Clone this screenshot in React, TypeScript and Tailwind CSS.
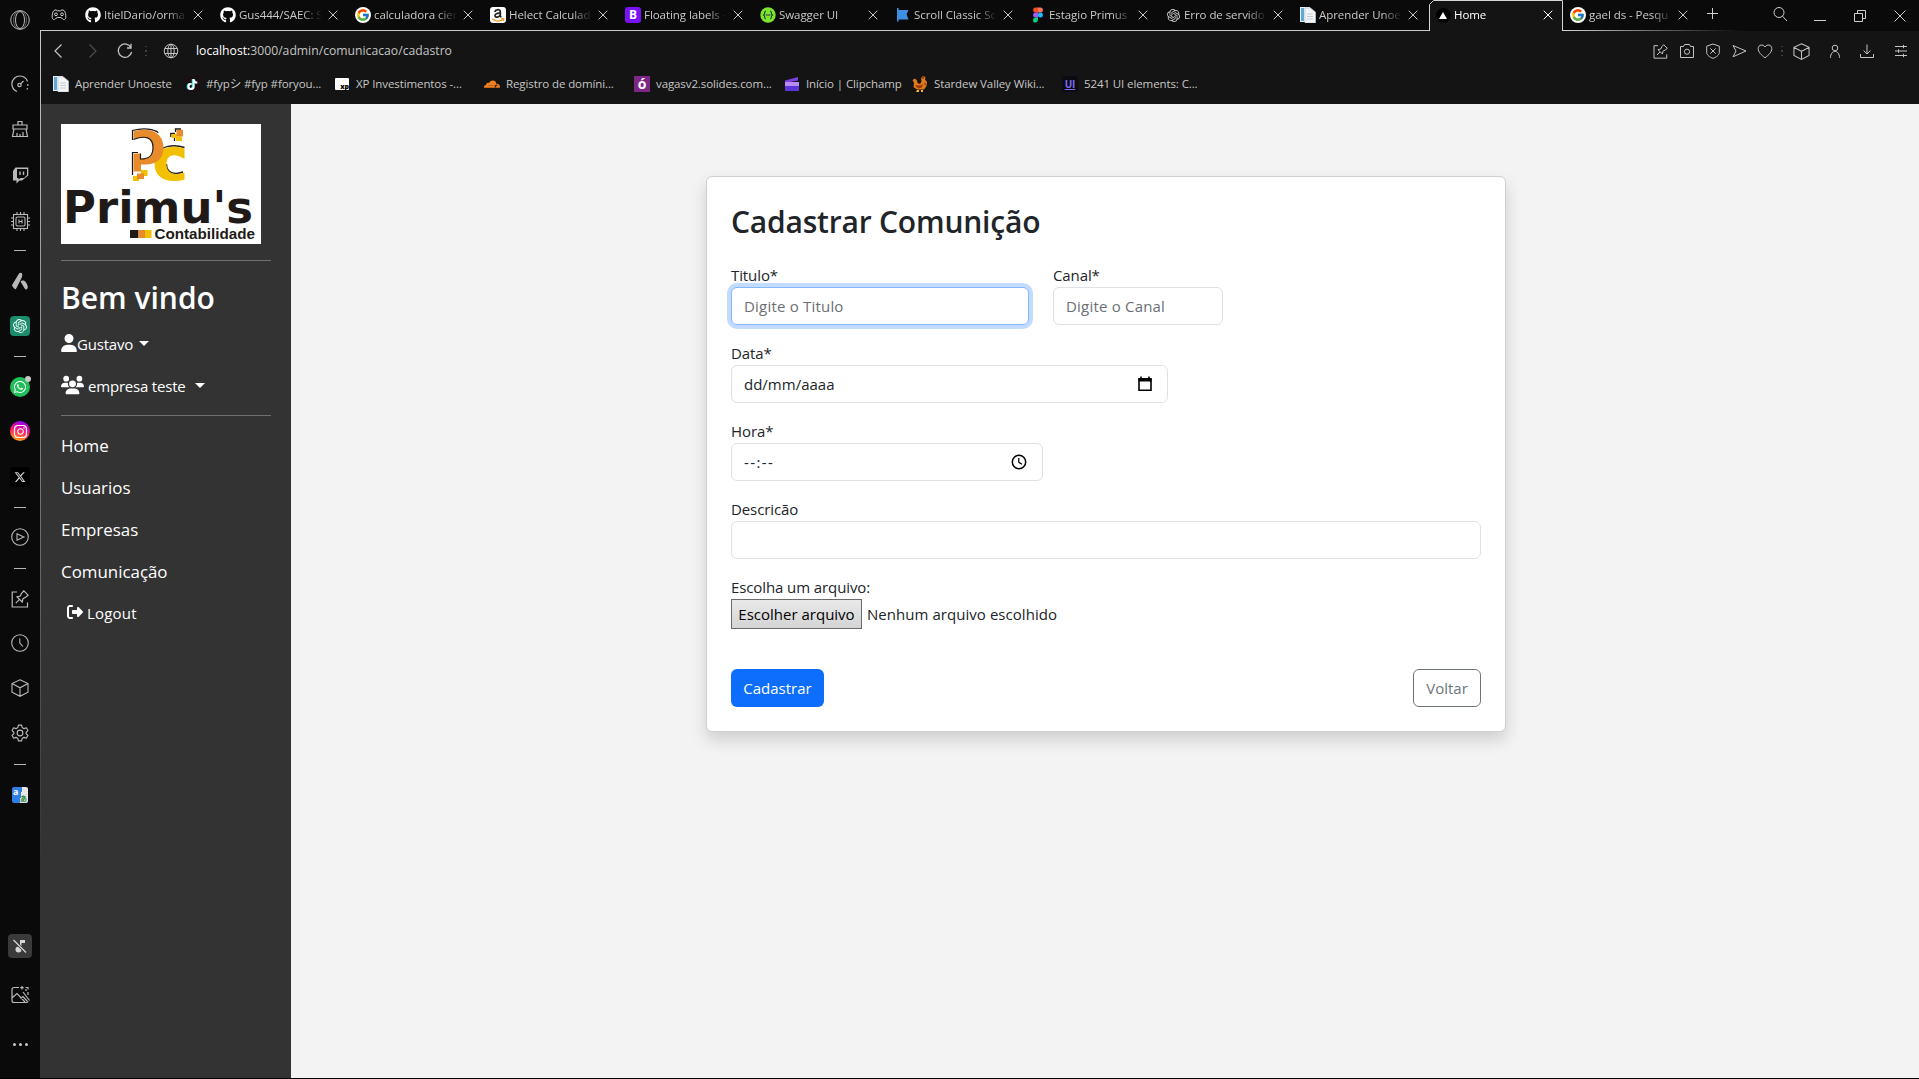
import React, { type ReactNode } from "react";
import { FaGithub, FaAmazon, FaUser, FaUsers, FaRightFromBracket, FaWhatsapp, FaInstagram, FaXTwitter, FaTiktok, FaCloudflare } from "react-icons/fa6";
import { FcGoogle } from "react-icons/fc";
import { SiOpenai } from "react-icons/si";

type IconProps = { children: ReactNode; size?: number; box?: number; sw?: number; className?: string };

function Line({ children, size = 16, box = 16, sw = 1, className = "" }: IconProps) {
  return (
    <svg width={size} height={size} viewBox={`0 0 ${box} ${box}`} fill="none" stroke="currentColor" strokeWidth={sw} className={`shrink-0 ${className}`}>
      {children}
    </svg>
  );
}

const CubeIcon = ({ size = 18 }: { size?: number }) => (
  <Line size={size} box={18} sw={1.1}>
    <path d="M9 .8 17 4.6V13.2L9 17.3 1 13.2V4.6ZM1 4.6 9 8.8 17 4.6M9 8.8V17.3" />
  </Line>
);

const PinIcon = ({ size = 16 }: { size?: number }) => (
  <Line size={size} box={18} sw={1.2}>
    <path d="M6 2H1.2V17H16.5V12.5M4.8 13.2 8.3 9.6M6 6.8 11.2 12 12 8.6 14.6 7.3 17.2 5.2 12.8.8 10.6 3.3 9.3 6Z" />
  </Line>
);

const CloseIcon = ({ className = "" }: { className?: string }) => (
  <Line size={10} box={10} className={className}>
    <path d="M.7.7 9.3 9.3M9.3.7.7 9.3" />
  </Line>
);

const PageIcon = () => (
  <svg width="16" height="16" viewBox="0 0 16 16" className="shrink-0">
    <path d="M0 0H10V15H0Z" fill="#e8f1f8" />
    <path d="M1 1H4V14H1Z" fill="#5fa8d8" />
    <path d="M5 1H10.5L15.5 5V16H5Z" fill="#f3f5f7" stroke="#b8c4cf" strokeWidth=".7" />
    <path d="M7 7H13M7 9.5H13M7 12H13" stroke="#c3ccd6" />
  </svg>
);

const GoogleBadge = () => (
  <span className="flex size-4 shrink-0 items-center justify-center rounded-full bg-white">
    <FcGoogle size={14} />
  </span>
);

const tabs: { label: string; icon: ReactNode; active?: boolean }[] = [
  { label: "ItielDario/orma", icon: <FaGithub size={16} className="text-white" /> },
  { label: "Gus444/SAEC: S", icon: <FaGithub size={16} className="text-white" /> },
  { label: "calculadora cien", icon: <GoogleBadge /> },
  {
    label: "Helect Calculad",
    icon: (
      <span className="flex size-4 items-center justify-center rounded-[3px] bg-white">
        <svg width="14" height="14" viewBox="0 0 14 14">
          <path d="M4 4C4.200 1.200 9.300.8 9.300 3.800V8.200L10.300 9.300M9.300 5.200C5.800 5 3.800 6 4 7.800 4.300 10 8.500 9.500 9.300 6.800" fill="none" stroke="#222" strokeWidth="1.700" />
          <path d="M1 10.800C4.500 13.500 9 13.500 12.500 11.300M10.300 10.600 12.800 10.800 12.300 13" fill="none" stroke="#f79a1c" strokeWidth="1.200" />
        </svg>
      </span>
    ),
  },
  {
    label: "Floating labels ·",
    icon: <span className="flex size-4 items-center justify-center rounded-[3px] bg-[#7a12f8] text-[12px] leading-none font-bold text-white">B</span>,
  },
  {
    label: "Swagger UI",
    icon: (
      <svg width="16" height="16" viewBox="0 0 16 16">
        <circle cx="8" cy="8" r="7.7" fill="#7fe52b" />
        <path d="M5.8 4.2C4 4.2 5.4 7 3.6 8 5.4 9 4 11.8 5.8 11.8M10.2 4.2C12 4.2 10.6 7 12.4 8 10.6 9 12 11.8 10.2 11.8M5.8 8H10.4" fill="none" stroke="#173647" strokeWidth="1.2" />
      </svg>
    ),
  },
  {
    label: "Scroll Classic Sc",
    icon: (
      <svg width="16" height="16" viewBox="0 0 16 16">
        <path d="M2 1H3.6V3H13.500L11.600 7.3 13.500 12.5H3.6V14.5H2Z" fill="#3f8fe0" />
      </svg>
    ),
  },
  {
    label: "Estagio Primus",
    icon: (
      <svg width="16" height="16" viewBox="0 0 16 16">
        <path d="M5.6.5H8V5.5H5.6A2.5 2.5 0 0 1 5.6.5Z" fill="#f24e1e" />
        <path d="M8 .5H10.4A2.5 2.5 0 0 1 10.4 5.5H8Z" fill="#ff7262" />
        <path d="M5.6 5.5H8V10.5H5.6A2.5 2.5 0 0 1 5.6 5.5Z" fill="#a259ff" />
        <circle cx="10.4" cy="8" r="2.5" fill="#1abcfe" />
        <path d="M5.6 10.5H8V13A2.5 2.5 0 1 1 5.6 10.5Z" fill="#0acf83" />
      </svg>
    ),
  },
  { label: "Erro de servido", icon: <SiOpenai size={13} className="text-[#d0d0d0]" /> },
  { label: "Aprender Unoe", icon: <PageIcon /> },
  {
    label: "Home",
    active: true,
    icon: (
      <span className="flex size-[15px] items-center justify-center rounded-full bg-black">
        <svg width="8" height="7" viewBox="0 0 8 7">
          <path d="M4 0 8 7H0Z" fill="#fff" />
        </svg>
      </span>
    ),
  },
  { label: "gael ds - Pesqu", icon: <GoogleBadge /> },
];

function Tab({ label, icon, active }: { label: string; icon: ReactNode; active?: boolean }) {
  return (
    <div className={`relative flex h-[31px] w-[135px] shrink-0 items-center pb-px pl-1.5 ${active ? "text-white" : "text-[#c9c9c9]"}`}>
      {active && (
        <svg width="135" height="31" viewBox="0 0 135 31" className="absolute top-0 left-0">
          <path d="M.5 31V4.5L4.5.5H133.5V31Z" fill="#141414" />
          <path d="M.5 31V4.5L4.5.5H133.5V31" fill="none" stroke="#d6d6d6" />
        </svg>
      )}
      <span className="relative flex size-4 shrink-0 items-center justify-center">{icon}</span>
      <span className="relative ml-[3px] w-[83px] overflow-hidden text-[11.5px] tracking-[-0.06px] whitespace-nowrap [mask-image:linear-gradient(to_right,#000_76%,transparent)]">
        {label}
      </span>
      <CloseIcon className="relative ml-[5.5px]" />
    </div>
  );
}

function TabBar() {
  return (
    <div className="relative h-[31px] bg-[#0a0a0a]">
      <div className="absolute right-0 bottom-0 left-0 flex h-px">
        <span className="w-[1389px] bg-[#c8c8c8]" />
        <span className="ml-[133px] w-[180px] bg-linear-to-r from-[#d6d6d6] to-transparent" />
      </div>
      <div className="relative flex h-full items-center text-[#d0d0d0]">
        <Line className="-mt-px mr-3 ml-[11px]">
          <path d="M3 3.5 5 2.8 6.3 3.8H9.7L11 2.8 13 3.5C14.5 5 15 8 14.8 10.5 14.5 13 12.5 13.2 11 11.2 10 10.2 6 10.2 5 11.2 3.5 13.2 1.5 13 1.2 10.5 1 8 1.5 5 3 3.5Z" />
          <circle cx="5" cy="7.3" r="1.4" />
          <circle cx="11" cy="7.3" r="1.4" />
        </Line>
        {tabs.map((t, i) => (
          <Tab key={i} {...t} />
        ))}
        <Line size={11} box={11} className="mb-[4px] ml-[8px]">
          <path d="M5.500 0V11M0 5.500H11" />
        </Line>
        <Line className="mb-[3px] ml-[54px]">
          <circle cx="7" cy="6.5" r="5" />
          <path d="M10.5 10.2 15 15" />
        </Line>
        <span className="mt-[10px] ml-[26px] h-px w-3 bg-[#d0d0d0]" />
        <Line size={12} box={12} className="ml-7">
          <path d="M.5 3.5H8.5V11.5H.5ZM3.5 3.5V.5H11.5V8.5H8.5" />
        </Line>
        <Line size={12} box={12} className="ml-7">
          <path d="M.5.5 11.5 11.5M11.5.5.5 11.5" />
        </Line>
      </div>
    </div>
  );
}

const Dots = ({ className = "" }: { className?: string }) => (
  <span className={`flex w-0.5 flex-col gap-[3px] ${className}`}>
    <i className="size-[1.5px] bg-[#444]" />
    <i className="size-[1.5px] bg-[#444]" />
    <i className="size-[1.5px] bg-[#444]" />
  </span>
);

function AddressBar() {
  return (
    <div className="flex h-10 items-center bg-[#141414] pr-[10px] text-[#c4c4c4]">
      <Line className="ml-[10px]" sw={1.2}>
        <path d="M10.5 1.5 4 8 10.5 14.5" />
      </Line>
      <Line className="ml-[17px] text-[#4d4d4d]" sw={1.2}>
        <path d="M5.5 1.5 12 8 5.5 14.5" />
      </Line>
      <Line className="ml-[17px]" sw={1.3}>
        <path d="M14 4.6A6.7 6.7 0 1 0 14.6 9M14 .8V5H10" />
      </Line>
      <Dots className="ml-[12px]" />
      <Line className="ml-[16px]">
        <circle cx="8" cy="8" r="6.8" />
        <ellipse cx="8" cy="8" rx="3.2" ry="6.8" />
        <path d="M1.8 5.5H14.2M1.8 10.5H14.2M8 1V15" />
      </Line>
      <span className="ml-[17px] text-[12.2px]">
        <span className="text-white">localhost:</span>3000/admin/comunicacao/cadastro
      </span>
      <span className="grow" />
      <PinIcon size={15} />
      <Line className="ml-[11px]">
        <path d="M1.5 3.5H4.5L5.5 1.5H10.5L11.5 3.5H14.5V14.5H1.5Z" />
        <circle cx="8" cy="8.7" r="2.6" />
      </Line>
      <Line className="ml-[10px]">
        <path d="M8 1 14.3 3.2V9.5C14.3 12 11 14.5 8 15.3 5 14.5 1.7 12 1.7 9.5V3.2ZM5.3 5.3 10.7 10.7M10.7 5.3 5.3 10.7" />
      </Line>
      <Line className="ml-[10px]">
        <path d="M2 2.5 15 8 2 13.8 5 8Z" />
      </Line>
      <Line className="ml-[10px]">
        <path d="M8 14.8C4 11.8 1.2 9 1.2 5.6 1.2 1.6 6.2.8 8 4 9.8.8 14.8 1.6 14.8 5.6 14.8 9 12 11.8 8 14.8Z" />
      </Line>
      <Dots className="ml-[8px]" />
      <span className="ml-[10px] flex">
        <CubeIcon size={17} />
      </span>
      <Line className="ml-[17px]">
        <circle cx="8" cy="5" r="2.800" />
        <path d="M3.5 14.8C3.5 6.300 12.5 6.300 12.5 14.8" />
      </Line>
      <Line className="ml-[16px]">
        <path d="M8 1.5V11M4.5 7.5 8 11 11.5 7.5M1.5 11V14.5H14.5V11" />
      </Line>
      <Line className="ml-[18px]">
        <path d="M2 3.5H14M2 8H14M2 12.5H14M10.5 1.8V5.2M5.5 6.3V9.7M10.5 10.8V14.2" />
      </Line>
    </div>
  );
}

function Bookmark({ icon, label, className }: { icon: ReactNode; label: string; className: string }) {
  return (
    <div className={`flex h-6 shrink-0 items-center whitespace-nowrap ${className}`}>
      <span className="mr-[6px] flex size-4 shrink-0 items-center justify-center">{icon}</span>
      <span>{label}</span>
    </div>
  );
}

function BookmarksBar() {
  return (
    <div className="flex h-[33px] items-start bg-[#141414] pt-px pl-3 text-[11.5px] leading-4 tracking-[-0.1px] text-[#c6c6c6]">
      <Bookmark className="w-[131px]" icon={<PageIcon />} label="Aprender Unoeste" />
      <Bookmark
        className="w-[150px]"
        icon={
          <span className="flex size-4 items-center justify-center rounded-[3px] bg-[#1c0e14]">
            <FaTiktok size={11} className="text-white drop-shadow-[-1px_0_0_#25f4ee]" />
          </span>
        }
        label="#fypシ #fyp #foryou..."
      />
      <Bookmark
        className="w-[150px]"
        icon={<span className="flex h-3 w-3.5 items-end justify-end rounded-[1px] bg-white text-[7px] leading-[6px] font-black text-black">xp</span>}
        label="XP Investimentos -..."
      />
      <Bookmark className="w-[150px]" icon={<FaCloudflare size={17} className="text-[#f38020]" />} label="Registro de domíni..." />
      <Bookmark
        className="w-[150px]"
        icon={<span className="flex size-4 items-center justify-center bg-[#7d2783] text-[14px] leading-none font-bold text-white">ó</span>}
        label="vagasv2.solides.com..."
      />
      <Bookmark
        className="w-[128px]"
        icon={
          <svg width="16" height="16" viewBox="0 0 16 16">
            <path d="M1 4.5 14 1V4.5L1 7Z" fill="#7b3fe0" />
            <path d="M1 6H15V13A2 2 0 0 1 13 15H3A2 2 0 0 1 1 13Z" fill="#b98bf7" />
            <path d="M1 10H15V13A2 2 0 0 1 13 15H3A2 2 0 0 1 1 13Z" fill="#5b35d9" />
          </svg>
        }
        label="Início | Clipchamp"
      />
      <Bookmark
        className="w-[150px]"
        icon={
          <svg width="16" height="16" viewBox="0 0 16 16">
            <path d="M.5 4 3 2.500 5 4.500 5.500 7 8 8 9.500 5.500 9 2 11 0 13.500 1 13 3.500 15 6 14.500 10 12 13.500H5L1.500 11 2 7Z" fill="#e07a1f" />
            <path d="M9 2 11 0 13 1 11 3ZM3 9 8 9.500 11 8 10 11.500 6 12.500ZM12 6 14 8 13 10Z" fill="#9c3a10" />
            <path d="M5 14H7V16H4ZM9 14H11V16H9Z" fill="#f2b632" />
          </svg>
        }
        label="Stardew Valley Wiki..."
      />
      <Bookmark
        className=""
        icon={<span className="flex size-4 items-center justify-center rounded-[3px] bg-[#0b0b12] text-[10px] leading-none font-bold text-[#7d6df0] underline">UI</span>}
        label="5241 UI elements: C..."
      />
    </div>
  );
}

const Dash = () => <span className="h-px w-3 bg-[#b5b5b5]" />;

function RailItem({ className, children }: { className: string; children: ReactNode }) {
  return <div className={`flex h-6 w-10 shrink-0 items-center justify-center ${className}`}>{children}</div>;
}

function Rail() {
  return (
    <nav className="flex w-10 shrink-0 flex-col bg-[#0a0a0a] text-[#b9b9b9]">
      <RailItem className="mt-2">
        <Line size={20} box={20}>
          <circle cx="10" cy="10" r="9.300" />
          <ellipse cx="10" cy="10" rx="4.500" ry="8.500" />
          <ellipse cx="10" cy="10" rx="6.500" ry="9.300" strokeWidth=".5" />
        </Line>
      </RailItem>
      <RailItem className="mt-10">
        <Line size={18} box={18} sw={1.2}>
          <path d="M6 16.500A8 8 0 1 1 16.500 6.500" />
          <circle cx="8.500" cy="10" r="1.700" />
          <path d="M9.800 8.700 12.500 6M16.800 9V11M16.300 13V14.500" />
        </Line>
      </RailItem>
      <RailItem className="mt-[21px]">
        <Line size={18} box={18} sw={1.2}>
          <path d="M7 5V1.500H11V5M2 5H16V9H2ZM3 9 1.500 16.500H16.500L15 9M6 13V16M12 12V16M9 14V16" />
        </Line>
      </RailItem>
      <RailItem className="mt-[22px]">
        <svg width="17" height="17" viewBox="0 0 17 17">
          <path d="M3.500.5 1 4V13.500H4.500V16.500L7.500 13.500H10L16.300 8.500V.5Z" fill="currentColor" />
          <path d="M5 2H15V8L12 11H8.500L6.500 12.500V11H5Z" fill="#0a0a0a" />
          <path d="M8 4.500V8M11.500 4.500V8" stroke="currentColor" strokeWidth="1.400" />
        </svg>
      </RailItem>
      <RailItem className="mt-[22px]">
        <Line size={19} box={19} sw={1.1}>
          <rect x="2.500" y="2.500" width="14" height="14" />
          <rect x="5" y="5" width="9" height="9" rx="1.500" />
          <path d="M8 7.500V11.500M11 7.500V11.500M8 9.500H11M6 0V2.500M9.500 0V2.500M13 0V2.500M6 16.500V19M9.500 16.500V19M13 16.500V19M0 6H2.500M0 9.500H2.500M0 13H2.500M16.500 6H19M16.500 9.500H19M16.500 13H19" />
        </Line>
      </RailItem>
      <RailItem className="mt-[5px]">
        <Dash />
      </RailItem>
      <RailItem className="mt-[7px]">
        <svg width="16" height="18" viewBox="0 0 16 18" fill="currentColor">
          <path d="M7 1.500C8 .2 10.200.6 10.300 2.500L10 5 4.500 16C3.500 18 2.800 17.500 2 16.200L.5 14.500C-.1 13.500.2 13 .5 12.300Z" />
          <path d="M8.500 9.500C10 8 12.500 8.300 14 10.500 16 13.500 16.300 16 15 17 14 18 13.500 17.500 12.500 16.300Z" />
        </svg>
      </RailItem>
      <RailItem className="mt-[21px]">
        <span className="flex size-5 items-center justify-center rounded-[4px] bg-[#1b8c6c]">
          <SiOpenai size={14} className="text-white" />
        </span>
      </RailItem>
      <RailItem className="mt-[6px]">
        <Dash />
      </RailItem>
      <RailItem className="mt-[7px]">
        <span className="relative flex size-5 items-center justify-center rounded-full bg-[#1fbf5a]">
          <FaWhatsapp size={14} className="text-white" />
          <i className="absolute -top-px -right-px size-1.5 rounded-full bg-[#c9c9c9]" />
        </span>
      </RailItem>
      <RailItem className="mt-5">
        <span className="flex size-5 items-center justify-center rounded-full bg-[linear-gradient(15deg,#ffb400_5%,#ff2a5f_45%,#c400c8_75%,#5a10ff)]">
          <FaInstagram size={15} className="text-white" />
        </span>
      </RailItem>
      <RailItem className="mt-[22px]">
        <span className="flex size-5 items-center justify-center rounded-[4px] bg-black">
          <FaXTwitter size={12} className="text-[#d0d0d0]" />
        </span>
      </RailItem>
      <RailItem className="mt-[6px]">
        <Dash />
      </RailItem>
      <RailItem className="mt-[6px]">
        <Line size={18} box={18} sw={1.1}>
          <circle cx="9" cy="9" r="8.300" />
          <path d="M6 5.800 12.800 9 6 12.200Z" />
        </Line>
      </RailItem>
      <RailItem className="mt-[7px]">
        <Dash />
      </RailItem>
      <RailItem className="mt-[7px]">
        <PinIcon size={18} />
      </RailItem>
      <RailItem className="mt-5">
        <Line size={18} box={18} sw={1.1}>
          <circle cx="9" cy="9" r="8.300" />
          <path d="M8.800 4.500V9L12 12.500" />
        </Line>
      </RailItem>
      <RailItem className="mt-[21px]">
        <CubeIcon />
      </RailItem>
      <RailItem className="mt-[21px]">
        <Line size={18} box={24} sw={1.5}>
          <circle cx="12" cy="12" r="3.800" />
          <path
            d="M9.800 1.500H14.200L14.900 4.800 17.300 6.200 20.500 5.100 22.700 8.900 20.200 11V13L22.700 15.100 20.500 18.900 17.300 17.800 14.900 19.200 14.200 22.500H9.800L9.100 19.200 6.700 17.800 3.500 18.900 1.300 15.100 3.800 13V11L1.300 8.900 3.500 5.100 6.700 6.200 9.100 4.800Z"
            strokeLinejoin="round"
          />
        </Line>
      </RailItem>
      <RailItem className="mt-[7px]">
        <Dash />
      </RailItem>
      <RailItem className="mt-[7px]">
        <span className="flex size-4 rounded-[2px] bg-[linear-gradient(100deg,#2f7fe6_55%,#e6e6e6_55%)] font-bold">
          <span className="w-2 pl-px text-[9px] leading-[9px] text-white">a</span>
          <span className="w-2 pt-[7px] font-['Noto_Sans_CJK_JP',sans-serif] text-[7px] leading-[8px] text-[#2b8a3a]">あ</span>
        </span>
      </RailItem>
      <RailItem className="mt-[127px]">
        <span className="flex size-6 items-center justify-center rounded-[4px] bg-[#3a3a3a] text-[#d6d6d6]">
          <svg width="16" height="16" viewBox="0 0 16 16" fill="currentColor">
            <circle cx="6.500" cy="11.500" r="3" />
            <path d="M8 2H13V5H9.500V12H8Z" />
            <path d="M1.500 2 14 14.500" stroke="#3a3a3a" strokeWidth="3" />
            <path d="M1.500 2 14 14.500" stroke="currentColor" strokeWidth="1.300" />
          </svg>
        </span>
      </RailItem>
      <RailItem className="mt-[25px]">
        <Line size={19} box={19} sw={1.2}>
          <path d="M8 1.500H3A2 2 0 0 0 1 3.500V14.500A2 2 0 0 0 3 16.500H15.500A2 2 0 0 0 17 15M1.500 11.500 6 7.500 14 16M9.500 12.500 12 10.500 16 15M12 6 18.500 14.500M11 0V3.500M9.300 1.700H12.700M15 3V5M17 6V9M14.500 1.500H17V3.500" />
        </Line>
      </RailItem>
      <RailItem className="mt-[25px] gap-[3px]">
        <i className="size-[3px] rounded-full bg-[#c9c9c9]" />
        <i className="size-[3px] rounded-full bg-[#c9c9c9]" />
        <i className="size-[3px] rounded-full bg-[#c9c9c9]" />
      </RailItem>
    </nav>
  );
}

function Logo() {
  return (
    <svg width="200" height="120" viewBox="0 0 200 120" className="block bg-white" role="img" aria-label="Primu's Contabilidade">
      <path d="M71.500 16V6.500C88 2 97 8 97 9M71.500 51V28.500H77" fill="none" stroke="#1f1a17" strokeWidth="1.200" />
      <path d="M114.500 8V5H120M109.800 13V9.500H114M113.500 17V14" fill="none" stroke="#1f1a17" strokeWidth="1.300" />
      <path d="M123.500 23.500C111 19.500 101 23 97 28M122 48C112 51.500 105.500 48 105.500 40" fill="none" stroke="#1f1a17" strokeWidth="1.400" />
      <path d="M123.500 35V24.500C107 19.500 93.500 26 93.500 40 93.500 55 108 60 123.500 55.500V48.500C112 52.500 105.500 48.500 105.500 40 105.500 31 113 28.500 123.500 35Z" fill="#f3c000" />
      <path d="M72.500 7.500C88 2.500 102.500 8 102.500 23.500 102.500 36 94 41 83 40.500H80V47.500H72.500V29.500H79.500V35C89 35 92 31 92 23.500 92 13 84 11 72.500 15.500Z" fill="#e78b2b" />
      <path d="M92 23.500C92 13 84 11 72.500 15.500M79.500 29.500V35C89 35 92 31 92 23.500" fill="none" stroke="#1f1a17" strokeWidth="1.200" />
      <path d="M110.500 10H116V12.500H121V17H115V14H110.500Z" fill="#f3c000" />
      <path d="M115.500 5.800H122V12.500H115.500Z" fill="#e78b2b" />
      <path d="M72 52H78V57H72ZM80 46H86.500V52H80Z" fill="#f3c000" />
      <path d="M76 49.500H83V55H76Z" fill="#e78b2b" />
      <text x="2" y="98.800" textLength="190" lengthAdjust="spacingAndGlyphs" fontSize="45" fontWeight="700" fill="#1f1a17" className="font-['DejaVu_Sans',sans-serif]">
        Primu's
      </text>
      <path d="M69 106H77.500V114H69Z" fill="#1f1a17" />
      <path d="M77.500 106H84V114H77.500Z" fill="#e78b2b" />
      <path d="M84 106H90.500V114H84Z" fill="#f3c000" />
      <text x="93.500" y="115" textLength="100.500" lengthAdjust="spacingAndGlyphs" fontSize="15" fontWeight="700" fill="#1f1a17" className="font-['Liberation_Sans',sans-serif]">
        Contabilidade
      </text>
    </svg>
  );
}

const Caret = ({ className }: { className: string }) => (
  <i className={`h-0 w-0 border-x-[5px] border-t-[5px] border-x-transparent border-t-white ${className}`} />
);

function SideMenu() {
  return (
    <aside className="flex w-[250px] shrink-0 flex-col bg-[#333] px-5 pt-5 text-white">
      <Logo />
      <hr className="mt-4 border-t border-[#707070]" />
      <h2 className="mt-[18px] text-[30px] leading-[38px] font-semibold">Bem vindo</h2>
      <div className="mt-[15px] flex h-6 items-center text-[15px] tracking-[-0.2px]">
        <FaUser size={18} className="-mt-0.5 w-4" />
        <span>Gustavo</span>
        <Caret className="ml-[6px] -mt-0.5" />
      </div>
      <div className="mt-[18px] flex h-6 items-center text-[15px] tracking-[-0.2px]">
        <FaUsers size={22} className="-mt-0.5 w-[23px]" />
        <span className="ml-1">empresa teste</span>
        <Caret className="ml-[9px] -mt-0.5" />
      </div>
      <hr className="mt-[17px] border-t border-[#707070]" />
      <ul className="mt-[9px] text-[16.900px] leading-[42px]">
        {["Home", "Usuarios", "Empresas", "Comunicação"].map((item) => (
          <li key={item}>
            <a>{item}</a>
          </li>
        ))}
        <li className="-mt-px flex items-center pl-[6px] text-[15px] tracking-[0.2px]">
          <FaRightFromBracket size={16} className="-mt-0.5 mr-1" />
          <span>Logout</span>
        </li>
      </ul>
    </aside>
  );
}

function Field({ label, className, children }: { label: string; className: string; children?: ReactNode }) {
  return (
    <label className={`flex flex-col ${className}`}>
      <span className="flex h-6 items-center tracking-[-0.1px]">{label}</span>
      {children}
    </label>
  );
}

const inputBase =
  "h-[38px] w-full rounded-md border bg-white px-3 text-[#212529] placeholder:tracking-[0.2px] placeholder:text-[#6b7075] focus:outline-none";

function FormCard() {
  return (
    <form className="mt-[72px] flex h-[556px] w-[800px] flex-col rounded-md border border-[#d0d0d0] bg-white px-6 pt-6 text-[15px] text-[#212529] shadow-[0_8px_16px_rgba(0,0,0,.15)]">
      <h2 className="mt-px mb-[22px] text-[30px] leading-[39px] font-semibold tracking-[-0.2px]">Cadastrar Comunição</h2>
      <div className="flex gap-6">
        <Field label="Titulo*" className="w-[298px]">
          <input className={`${inputBase} border-[#86b7fe] shadow-[0_0_0_4px_#c2dbfe]`} placeholder="Digite o Titulo" />
        </Field>
        <Field label="Canal*" className="w-[170px]">
          <input className={`${inputBase} border-[#dee2e6]`} placeholder="Digite o Canal" />
        </Field>
      </div>
      <Field label="Data*" className="mt-4 w-[437px]">
        <span className={`${inputBase} flex items-center justify-between border-[#dee2e6]`}>
          <span>dd/mm/aaaa</span>
          <svg width="14" height="16" viewBox="0 0 14 16" className="mr-[3px]">
            <path d="M3 .5V3M11 .5V3" stroke="#000" strokeWidth="1.600" />
            <path d="M1 3H13V14.200H1Z" fill="none" stroke="#000" strokeWidth="1.600" />
            <path d="M.5 2H13.500V5.500H.5Z" />
          </svg>
        </span>
      </Field>
      <Field label="Hora*" className="mt-4 w-[312px]">
        <span className={`${inputBase} flex items-center justify-between border-[#dee2e6]`}>
          <span className="tracking-[1.4px]">--:--</span>
          <svg width="16" height="16" viewBox="0 0 16 16" fill="none" stroke="#000" className="mr-[3px]">
            <circle cx="8" cy="8" r="6.700" strokeWidth="1.500" />
            <path d="M7.800 4V8.300L11 10.300" strokeWidth="1.200" />
          </svg>
        </span>
      </Field>
      <Field label="Descricão" className="mt-4">
        <input className={`${inputBase} border-[#dee2e6]`} />
      </Field>
      <Field label="Escolha um arquivo:" className="mt-4">
        <span className="flex h-[30px] items-center">
          <span className="flex h-[30px] w-[131px] items-center justify-center border border-[#6b6b6b] bg-linear-to-b from-[#e9e9e9] to-[#d4d4d4] text-black">
            Escolher arquivo
          </span>
          <span className="ml-[5px] tracking-[0.05px]">Nenhum arquivo escolhido</span>
        </span>
      </Field>
      <div className="mt-10 flex justify-between">
        <button type="button" className="h-[38px] w-[93px] rounded-md bg-[#0d6efd] text-white">
          Cadastrar
        </button>
        <button type="button" className="h-[38px] w-[68px] rounded-md border border-[#6c757d] text-[#6c757d]">
          Voltar
        </button>
      </div>
    </form>
  );
}

export default function App() {
  return (
    <div className="flex h-[1079px] w-[1919px] overflow-hidden border-b border-black bg-[#0a0a0a] font-['Open_Sans','Noto_Sans_CJK_JP',sans-serif]">
      <Rail />
      <div className="flex min-w-0 grow flex-col">
        <TabBar />
        <div className="flex min-h-0 grow">
          <span className="w-px shrink-0 bg-linear-to-b from-[#c8c8c8] via-[#6a6a6a] to-[#333] to-80%" />
          <div className="flex min-w-0 grow flex-col">
            <AddressBar />
            <BookmarksBar />
            <div className="flex min-h-0 grow">
              <SideMenu />
              <main className="flex grow flex-col items-center bg-[#f3f3f3] pl-[2px]">
                <FormCard />
              </main>
            </div>
          </div>
        </div>
      </div>
    </div>
  );
}
